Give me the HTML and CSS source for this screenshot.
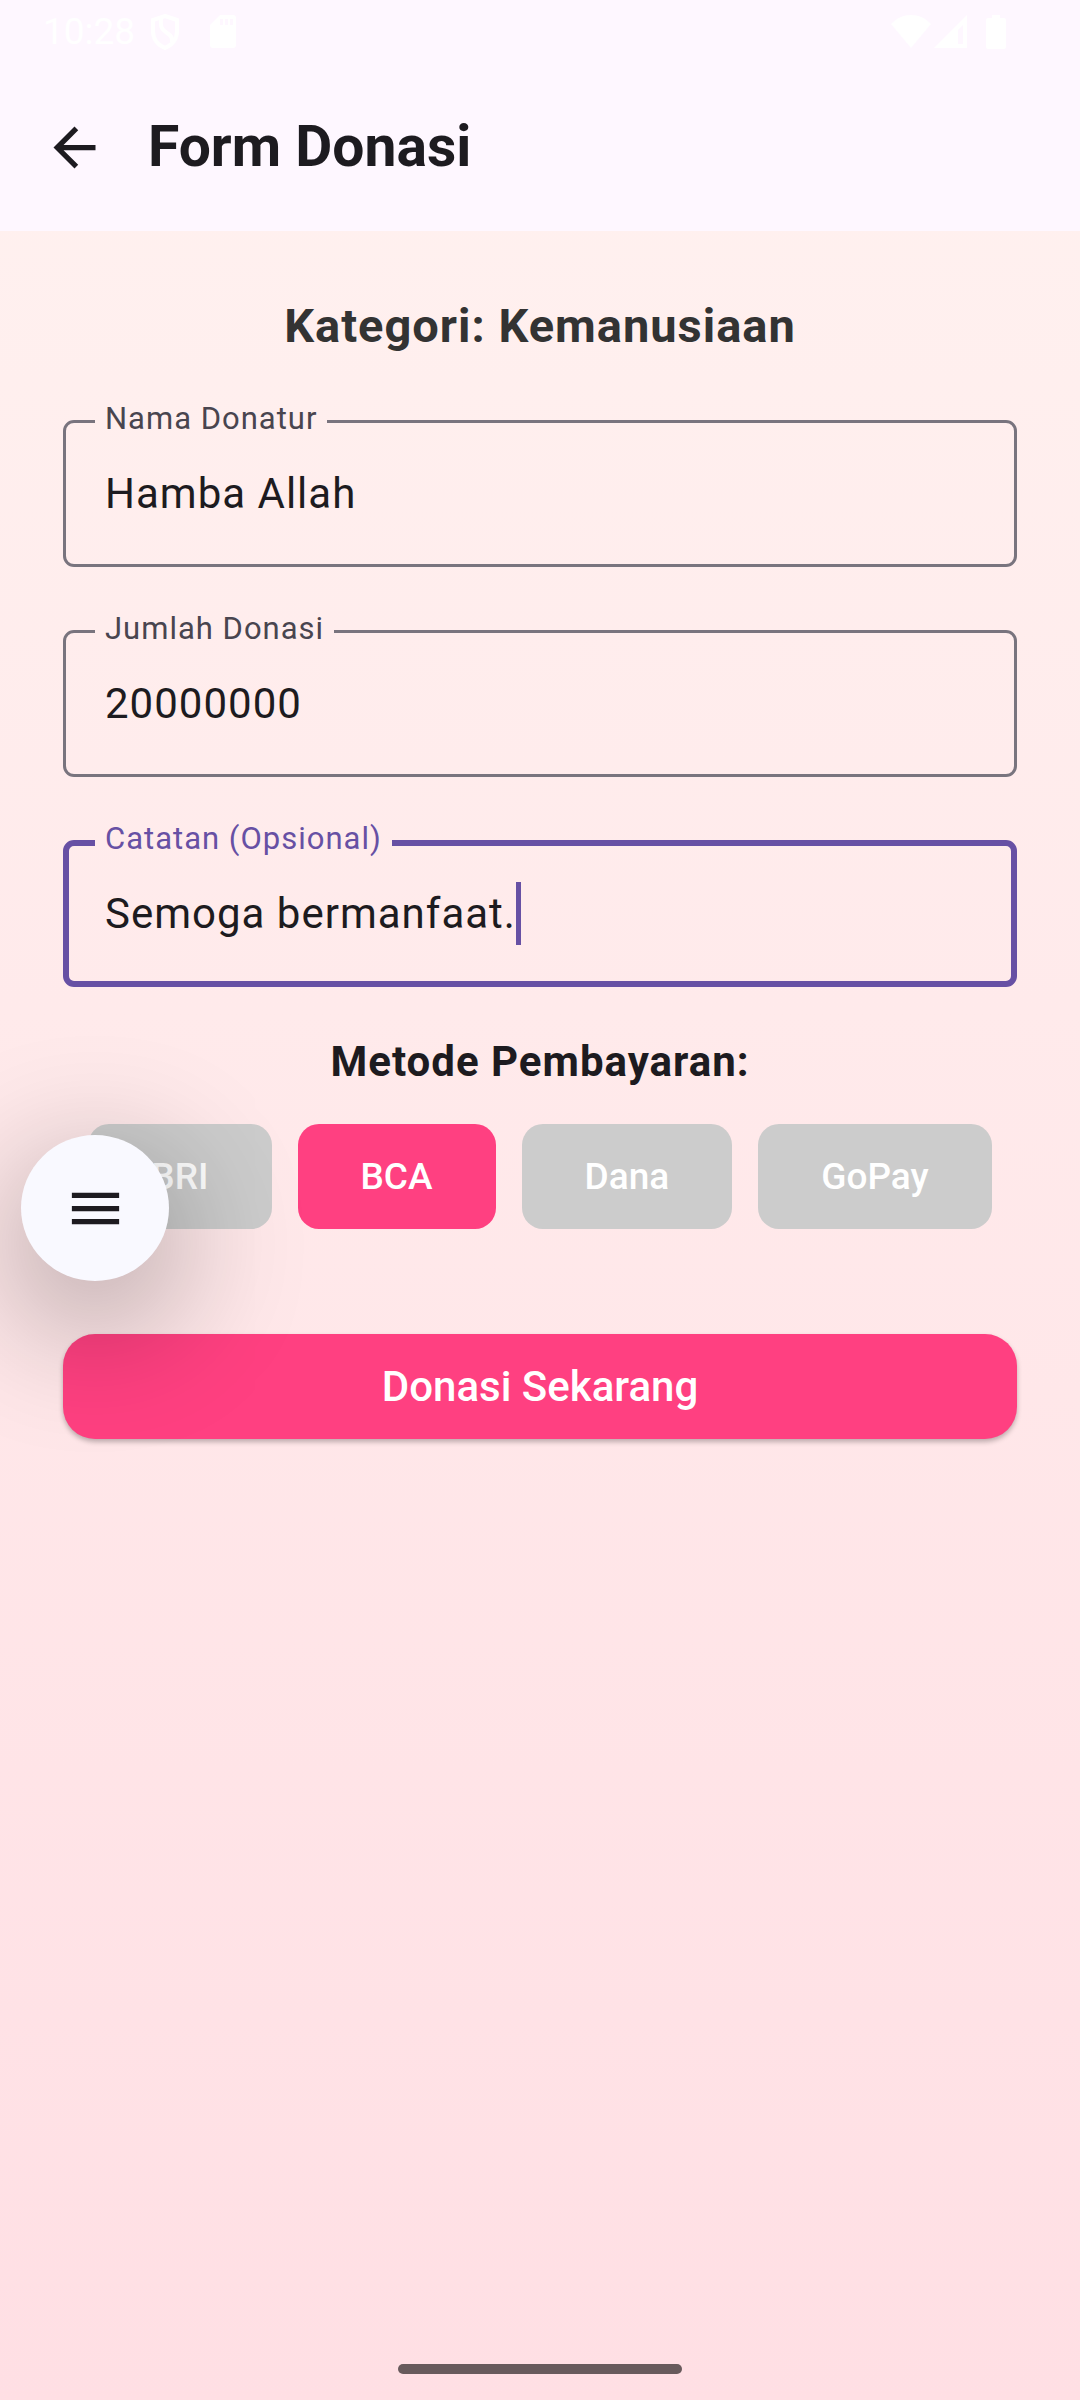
FILE: index.html
```html
<!DOCTYPE html>
<html lang="id">
<head>
  <meta charset="utf-8">
  <meta name="viewport" content="width=device-width, initial-scale=1">
  <title>Form Donasi</title>
  <link rel="stylesheet" href="styles.css">
</head>
<body class="screen">
  <header class="top">
    <div class="status-bar">
      <span class="clock">10:28</span>
      <svg class="shield" viewBox="0 0 30 36" width="30" height="36" aria-hidden="true">
        <path d="M15 2 27 6V17C27 25 22 31 15 34 8 31 3 25 3 17V6Z" fill="none" stroke="#fff" stroke-width="4"/>
        <path d="M11 4C10 15 13 16 17 19 22 22 22 24 22 28" fill="none" stroke="#fff" stroke-width="4"/>
      </svg>
      <svg class="sd-card" viewBox="0 0 26 33" width="26" height="33" aria-hidden="true">
        <path fill="#fff" fill-rule="evenodd" d="M10 0H23a3 3 0 0 1 3 3V30a3 3 0 0 1-3 3H3a3 3 0 0 1-3-3V10ZM10 4V10H13V4ZM15 4V10H18V4ZM20 4V10H23V4Z"/>
      </svg>
      <div class="signals">
        <svg viewBox="0 0 40 34" width="40" height="34" aria-hidden="true">
          <path fill="#fff" d="M0 9C11-3 29-3 40 9L20 33Z"/>
        </svg>
        <svg viewBox="0 0 33 34" width="33" height="34" aria-hidden="true">
          <path fill="#fff" fill-rule="evenodd" d="M33 0V33H0ZM29 10 24 15V29H29Z"/>
        </svg>
        <svg class="battery" viewBox="0 0 20 34" width="20" height="34" aria-hidden="true">
          <path fill="#fff" d="M6 0H14V3H18a2 2 0 0 1 2 2V32a2 2 0 0 1-2 2H2a2 2 0 0 1-2-2V5A2 2 0 0 1 2 3H6Z"/>
        </svg>
      </div>
    </div>
    <div class="app-bar">
      <button class="back" type="button" aria-label="Kembali">
        <svg viewBox="0 0 24 24" width="63" height="63" aria-hidden="true">
          <path fill="#1d1b20" d="M20 11H7.83l5.59-5.59L12 4l-8 8 8 8 1.41-1.41L7.83 13H20z"/>
        </svg>
      </button>
      <h1 class="title">Form Donasi</h1>
    </div>
  </header>

  <main class="content">
    <form class="form">
      <h2 class="category">Kategori: Kemanusiaan</h2>

      <fieldset class="field">
        <legend class="notch"><label for="nama">Nama Donatur</label></legend>
        <input class="input" id="nama" type="text" value="Hamba Allah">
      </fieldset>

      <fieldset class="field">
        <legend class="notch"><label for="jumlah">Jumlah Donasi</label></legend>
        <input class="input" id="jumlah" type="text" inputmode="numeric" value="20000000">
      </fieldset>

      <fieldset class="field field-active">
        <legend class="notch"><label for="catatan">Catatan (Opsional)</label></legend>
        <div class="entry">
          <input class="input" id="catatan" type="text" value="Semoga bermanfaat.">
          <span class="caret"></span>
        </div>
      </fieldset>

      <h3 class="method-title">Metode Pembayaran:</h3>
      <div class="methods">
        <button class="method" type="button">BRI</button>
        <button class="method method-selected" type="button">BCA</button>
        <button class="method" type="button">Dana</button>
        <button class="method" type="button">GoPay</button>
      </div>

      <button class="submit" type="submit">Donasi Sekarang</button>
    </form>
  </main>

  <button class="menu" type="button" aria-label="Menu">
    <svg viewBox="0 0 24 24" width="63" height="63" aria-hidden="true">
      <path fill="#1d1b20" d="M3 18h18v-2H3v2zm0-5h18v-2H3v2zm0-7v2h18V6H3z"/>
    </svg>
  </button>

  <footer class="nav-bar"><span class="handle"></span></footer>
</body>
</html>
```

FILE: styles.css
```css
* {
  box-sizing: border-box;
}

.screen {
  display: flex;
  flex-direction: column;
  min-height: 100vh;
  margin: 0;
  background: linear-gradient(#fff2f0, #ffdfe4);
  color: #1d1b20;
  font-family: Roboto, "Liberation Sans", sans-serif;
}

button {
  padding: 0;
  border: 0;
  font-family: inherit;
  cursor: pointer;
}

svg {
  display: block;
}

/* Status bar and app bar */
.top {
  background: #fef7ff;
}

.status-bar {
  display: flex;
  align-items: center;
  height: 63px;
  padding: 0 74px 0 43px;
  color: #fff;
}

.clock {
  font-size: 37px;
  line-height: 63px;
}

.shield {
  margin-left: 15px;
}

.sd-card {
  margin-left: 30px;
}

.signals {
  display: flex;
  gap: 3px;
  margin-left: auto;
}

.battery {
  margin-left: 16px;
}

.app-bar {
  display: flex;
  align-items: center;
  gap: 42px;
  height: 168px;
  padding: 0 43px;
}

.back {
  background: none;
}

.title {
  margin: 0;
  font-size: 57px;
  line-height: 74px;
  font-weight: 700;
}

/* Form */
.content {
  padding: 63px;
}

.form {
  display: flex;
  flex-direction: column;
  gap: 43px;
}

.category {
  margin: 0;
  color: #333;
  font-size: 47px;
  line-height: 63px;
  font-weight: 700;
  letter-spacing: 1px;
  text-align: center;
}

.field {
  min-width: 0;
  margin: 0;
  padding: 0 29px;
  border: 3px solid #79747e;
  border-radius: 11px;
}

.notch {
  padding: 0 10px 5px;
  color: #49454f;
  font-size: 31px;
  line-height: 38px;
  letter-spacing: 1px;
}

.notch label {
  display: block;
}

.input {
  display: block;
  width: 100%;
  height: 121px;
  padding: 19px 10px 39px;
  border: 0;
  outline: 0;
  background: none;
  color: #1d1b20;
  font-family: inherit;
  font-size: 42px;
  line-height: 63px;
  letter-spacing: 1px;
}

.field-active {
  padding: 0 26px;
  border: 6px solid #6750a4;
}

.field-active .notch {
  padding-bottom: 8px;
  color: #6750a4;
}

.entry {
  display: flex;
  padding: 16px 10px 36px;
}

.entry .input {
  field-sizing: content;
  width: auto;
  height: 63px;
  padding: 0;
}

.caret {
  width: 5px;
  height: 63px;
  background: #6750a4;
}

.method-title {
  margin: 0;
  font-size: 42px;
  line-height: 63px;
  font-weight: 700;
  letter-spacing: 1px;
  text-align: center;
}

.methods {
  display: flex;
  justify-content: center;
  gap: 26px;
  margin: -12px 0 62px;
}

.method {
  height: 105px;
  padding: 0 63px;
  border-radius: 21px;
  background: #ccc;
  color: #fff;
  font-size: 37px;
  font-weight: 500;
}

.method-selected {
  background: #ff4081;
}

.submit {
  height: 105px;
  border-radius: 32px;
  background: #ff4081;
  box-shadow: 0 3px 5px rgba(0, 0, 0, 0.26);
  color: #fff;
  font-size: 42px;
  font-weight: 500;
}

/* Floating menu button */
.menu {
  position: absolute;
  top: 1135px;
  left: 21px;
  display: grid;
  place-items: center;
  width: 148px;
  height: 146px;
  border-radius: 50%;
  background: #f9f9ff;
  box-shadow: 0 36px 130px 12px rgba(0, 0, 0, 0.3);
}

/* Gesture navigation */
.nav-bar {
  display: flex;
  justify-content: center;
  margin-top: auto;
  padding: 26px;
}

.handle {
  width: 284px;
  height: 10px;
  border-radius: 5px;
  background: #685a5c;
}
```
